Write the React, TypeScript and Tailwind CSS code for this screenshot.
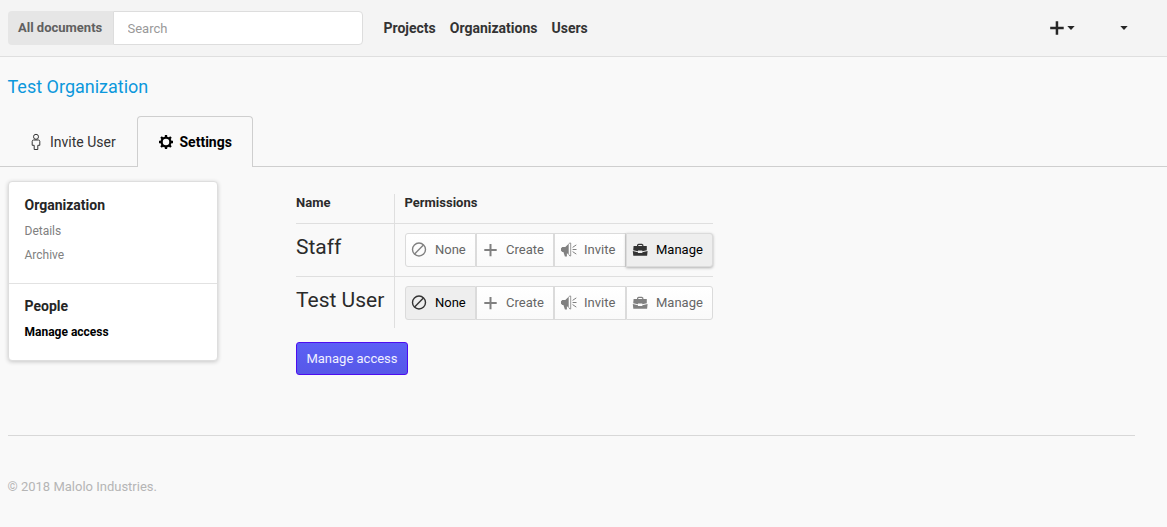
import React from "react";

type IconProps = { className?: string };

const BanIcon = ({ className }: IconProps) => (
  <svg className={className} width="16" height="16" viewBox="0 0 16 16" fill="none" stroke="currentColor" strokeWidth="1.4">
    <circle cx="8" cy="7.500" r="6.500" />
    <path d="M3.600 11.900 12.400 3.100" />
  </svg>
);

const PlusIcon = ({ className }: IconProps) => (
  <svg className={className} width="16" height="16" viewBox="0 0 16 16" fill="currentColor">
    <path d="M7.500 2h2v5h5.200v2H9.500v5.200h-2V9H2.300V7h5.200z" />
  </svg>
);

const MegaphoneIcon = ({ className }: IconProps) => (
  <svg className={className} width="17" height="16" viewBox="0 0 17 16" fill="currentColor">
    <path d="M8.700 1.800v10.600L6.900 11.200v3.300H4.900L3.400 10H2.300L1 8.800V6.300L2.300 5h3z" />
    <path d="M8.700 1.800 9.900 1h.8v13h-.8l-1.200-1.600" fill="none" stroke="currentColor" strokeWidth=".8" />
    <path d="M12.600 5.400 16.300 2.900M12.600 7.500h3.900M12.600 9.600l3.700 2.500" fill="none" stroke="currentColor" strokeWidth="1" />
  </svg>
);

const BriefcaseIcon = ({ className }: IconProps) => (
  <svg className={className} width="16" height="16" viewBox="0 0 16 16" fill="currentColor">
    <path d="M5.600 4.300V3.100l1-.7h3.200l1 .7v1.200" fill="none" stroke="currentColor" strokeWidth="1.200" />
    <path d="M1.600 4h13.200v4.200l-4.500 1.100v-.8H6v.8L1.200 8.200z" />
    <path d="M.8 9l5.200 1.200v.8h4.300v-.8L15.600 9l-.5 4.800H1.300z" />
  </svg>
);

const PersonIcon = () => (
  <svg width="10" height="18" viewBox="0 0 10 18" fill="none" stroke="currentColor" strokeWidth="1">
    <circle cx="5" cy="3.800" r="2.500" />
    <path d="M2.500 7h5c.8 0 1.300.5 1.300 1.300v4H6.800v4.200H3.200v-4.200h-2v-4C1.200 7.500 1.700 7 2.500 7z" />
  </svg>
);

const GearIcon = () => (
  <svg width="14" height="14" viewBox="0 0 14 14" fill="none" stroke="currentColor">
    <circle cx="7" cy="7" r="4.400" strokeWidth="2.300" />
    <path d="M7 0v2.500M7 11.500V14M0 7h2.500M11.500 7H14M2.050 2.050l1.800 1.800M10.150 10.150l1.800 1.800M2.050 11.950l1.800-1.800M10.150 3.850l1.800-1.800" strokeWidth="2.300" />
  </svg>
);

const Caret = () => (
  <svg width="8" height="4" viewBox="0 0 8 4" fill="currentColor">
    <path d="M.3 0h7.400L4 4z" />
  </svg>
);

const options = [
  { label: "None", Icon: BanIcon, box: "w-[71px] rounded-l-[3px]" },
  { label: "Create", Icon: PlusIcon, box: "w-[78px]" },
  { label: "Invite", Icon: MegaphoneIcon, box: "w-[72px]" },
  { label: "Manage", Icon: BriefcaseIcon, box: "w-[87px] rounded-r-[3px]" },
];

function Permissions({ active, raised }: { active: string; raised?: boolean }) {
  return (
    <div className="flex">
      {options.map(({ label, Icon, box }) => {
        const on = label === active;
        return (
          <button
            key={label}
            className={`flex h-[34px] shrink-0 items-center border border-[#dbdbdb] pl-[5px] text-[13px] ${box} ${
              on ? "bg-[#eeeeee] text-black" : "bg-linear-to-b from-white to-[#fafafa] text-[#666]"
            } ${on && raised ? "relative shadow-[0_1px_3px_rgba(0,0,0,0.3)]" : ""}`}
          >
            <span className="flex w-6 shrink-0">
              <Icon className={on ? "text-[#333]" : "text-[#808080]"} />
            </span>
            {label}
          </button>
        );
      })}
    </div>
  );
}

export default function App() {
  return (
    <div className="min-h-[527px] bg-[#f9f9f9] font-['Roboto',sans-serif] text-[#2b2b2b]">
      <header className="flex h-[57px] items-start border-b border-[#dfdfdf] bg-[#f4f4f4] pt-[11px] pl-2">
        <div className="flex h-[34px] w-[355px]">
          <button className="w-[105px] rounded-l-[4px] bg-[#e6e6e6] pl-2.5 text-left text-[13px] font-bold text-[#606060]">
            All documents
          </button>
          <input
            placeholder="Search"
            className="w-[250px] rounded-r-[4px] border border-[#dddddd] bg-white pt-0.5 pl-[13.500px] text-[13px] placeholder:text-[#999]"
          />
        </div>
        <nav className="ml-[20.500px] flex h-[34px] items-center gap-3.5 text-[14px] font-bold text-[#333]">
          <a>Projects</a>
          <a>Organizations</a>
          <a>Users</a>
        </nav>
        <div className="mr-[39px] ml-auto flex h-[34px] items-center text-[#262626]">
          <svg width="14" height="14" viewBox="0 0 14 14" fill="currentColor">
            <path d="M5.700 .3h2.500v5.500h5.500v2.400H8.200v5.500H5.700V8.200H.2V5.800h5.500z" />
          </svg>
          <span className="ml-[3px]"><Caret /></span>
          <span className="ml-[45px]"><Caret /></span>
        </div>
      </header>

      <h1 className="h-[59px] pt-[17px] pl-[7.500px] text-[18px] leading-[26px] text-[#0c98dc]">Test Organization</h1>

      <div className="flex h-[51px] text-[14px]">
        <a className="flex w-[137px] items-center border-b border-[#cfcfcf] pt-[2px] pl-[31px] text-[#333]">
          <PersonIcon />
          <span className="ml-[9px]">Invite User</span>
        </a>
        <a className="flex w-[116px] items-center rounded-t-[4px] border border-b-0 border-[#cfcfcf] pl-[20.500px] font-bold text-black">
          <GearIcon />
          <span className="ml-[7px]">Settings</span>
        </a>
        <div className="flex-1 border-b border-[#cfcfcf]" />
      </div>

      <div className="flex pl-2">
        <aside className="mt-3.5 h-[180px] w-[210px] rounded-[4px] border border-[#dedede] bg-white shadow-[0_1px_4px_rgba(0,0,0,0.2)]">
          <div className="h-[102px] border-b border-[#e2e2e2] px-[15.500px] pt-[13px] text-[12px] text-[#808080]">
            <h2 className="text-[14px] leading-5 font-bold text-[#262626]">Organization</h2>
            <p className="mt-1 leading-6">Details</p>
            <p className="leading-6">Archive</p>
          </div>
          <div className="px-[15.500px] pt-3">
            <h2 className="text-[14px] leading-5 font-bold text-[#262626]">People</h2>
            <p className="mt-1 text-[12px] leading-6 font-bold text-black">Manage access</p>
          </div>
        </aside>

        <main className="ml-[78px] pt-[27px]">
          <div className="grid w-[417px] grid-cols-[99px_318px]">
            <div className="h-[30px] border-r border-b border-[#dfdfdf] text-[13px] leading-[17px] font-bold">Name</div>
            <div className="border-b border-[#dfdfdf] pl-[9.500px] text-[13px] leading-[17px] font-bold">Permissions</div>
            <div className="h-[53px] border-r border-b border-[#dfdfdf] pt-2.5 text-[21px] leading-[26px]">Staff</div>
            <div className="border-b border-[#dfdfdf] pt-[9px] pl-2.5"><Permissions active="Manage" raised /></div>
            <div className="h-[51px] border-r border-[#dfdfdf] pt-2.5 text-[21px] leading-[26px] whitespace-nowrap">Test User</div>
            <div className="pt-[9px] pl-2.5"><Permissions active="None" /></div>
          </div>
          <button className="mt-3.5 h-[33px] w-[112px] rounded-[3px] border border-[#4d0df0] bg-linear-to-b from-[#5c60f5] to-[#5758e8] text-[13px] text-[#f0f0ff]">
            Manage access
          </button>
        </main>
      </div>

      <footer className="mt-[60px] mr-8 ml-2 border-t border-[#d8d8d8] pt-[42px] text-[13px] leading-[18px] text-[#b5b5b5]">
        <span className="-ml-[0.500px]">© 2018 Malolo Industries.</span>
      </footer>
    </div>
  );
}
